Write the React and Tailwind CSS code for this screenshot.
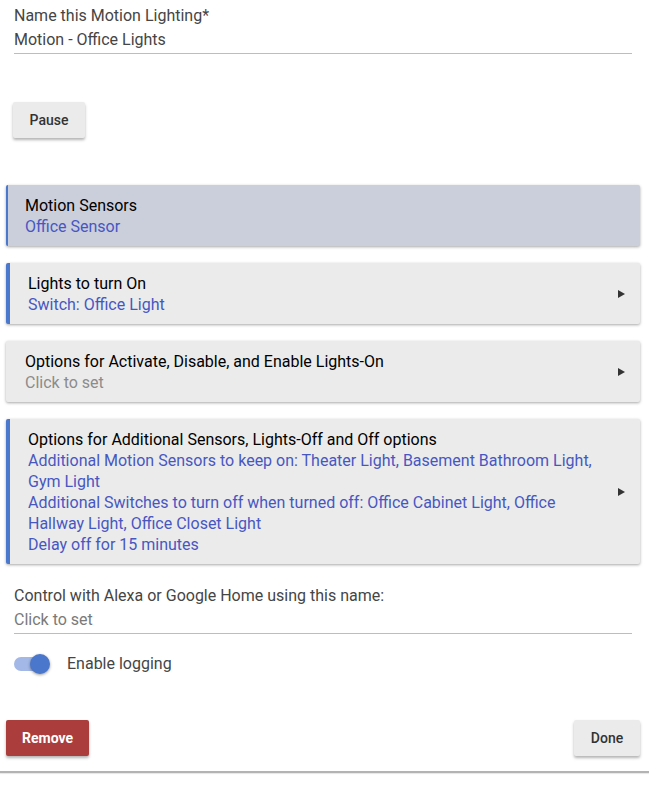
export default function App() {
  const cards = [
    {
      title: "Motion Sensors",
      lines: ["Office Sensor"],
      active: true,
      border: "thin",
      arrow: false,
    },
    {
      title: "Lights to turn On",
      lines: ["Switch: Office Light"],
      border: "thick",
      arrow: true,
    },
    {
      title: "Options for Activate, Disable, and Enable Lights-On",
      lines: ["Click to set"],
      muted: true,
      arrow: true,
    },
    {
      title: "Options for Additional Sensors, Lights-Off and Off options",
      lines: [
        "Additional Motion Sensors to keep on: Theater Light, Basement Bathroom Light, Gym Light",
        "Additional Switches to turn off when turned off: Office Cabinet Light, Office Hallway Light, Office Closet Light",
        "Delay off for 15 minutes",
      ],
      border: "thick",
      arrow: true,
    },
  ];

  return (
    <div className="min-h-screen w-full bg-white font-['Roboto',sans-serif] text-[16px]">
      {/* name field */}
      <div className="mx-[14px] w-[618px] pt-1">
        <div className="leading-[24px] text-[#454545]">Name this Motion Lighting*</div>
        <div className="border-b border-[#bdbdbd] pb-px leading-[24px] text-[#454545]">
          Motion - Office Lights
        </div>
      </div>

      <button className="ml-[13px] mt-[48px] h-[36px] w-[72px] rounded-[2px] bg-[#ebebeb] text-[14px] font-medium text-[#333] shadow-[0_2px_3px_rgba(0,0,0,0.3)]">
        Pause
      </button>

      {/* sections */}
      <div className="ml-[6px] mr-[9px] mt-[47px] flex flex-col gap-[17px]">
        {cards.map((c) => (
          <div
            key={c.title}
            className={`flex items-center rounded-[2px] pt-[10px] pb-[9px] pr-[15px] shadow-[0_1px_3px_rgba(0,0,0,0.35)] ${
              c.active ? "bg-[#cbcedb]" : "bg-[#ebebeb]"
            } ${c.border === "thick" ? "border-l-4 border-[#4a78cc] pl-[18px]" : ""} ${
              c.border === "thin" ? "border-l-2 border-[#4a78cc] pl-[17px]" : ""
            } ${!c.border ? "pl-[19px]" : ""}`}
          >
            <div className="flex-1 pr-[8px] leading-[21px]">
              <div className="text-black">{c.title}</div>
              {c.lines.map((l) => (
                <div key={l} className={c.muted ? "text-[#8c8c8c]" : "text-[#4757c2]"}>
                  {l}
                </div>
              ))}
            </div>
            {c.arrow && (
              <svg width="7" height="8" viewBox="0 0 7 8" className="shrink-0">
                <path d="M0 0 L7 4 L0 8 Z" fill="#333" />
              </svg>
            )}
          </div>
        ))}
      </div>

      {/* alexa name */}
      <div className="mx-[14px] mt-[20px] w-[618px]">
        <div className="leading-[24px] text-[#454545]">Control with Alexa or Google Home using this name:</div>
        <div className="border-b border-[#bdbdbd] pb-px leading-[24px] text-[#7a7a7a]">Click to set</div>
      </div>

      {/* toggle */}
      <div className="ml-[14px] mt-[20px] flex h-[20px] items-center">
        <div className="relative h-[14px] w-[34px] rounded-full bg-[#a3b8e6]">
          <div className="absolute -top-[3px] right-[-2px] h-[20px] w-[20px] rounded-full bg-[#4a76cc] shadow-[0_1px_3px_rgba(0,0,0,0.4)]" />
        </div>
        <span className="ml-[19px] leading-[20px] text-[#454545]">Enable logging</span>
      </div>

      {/* buttons */}
      <div className="ml-[6px] mr-[9px] mt-[46px] flex justify-between">
        <button className="h-[36px] w-[83px] rounded-[2px] bg-[#ab3e3c] text-[14px] font-bold text-white shadow-[0_2px_3px_rgba(0,0,0,0.3)]">
          Remove
        </button>
        <button className="h-[36px] w-[66px] rounded-[2px] bg-[#ebebeb] text-[14px] font-medium text-[#333] shadow-[0_2px_3px_rgba(0,0,0,0.3)]">
          Done
        </button>
      </div>

      <div className="mt-[15px] h-[2px] w-full bg-[#b3b3b3] shadow-[0_1px_1px_rgba(0,0,0,0.1)]" />
    </div>
  );
}
